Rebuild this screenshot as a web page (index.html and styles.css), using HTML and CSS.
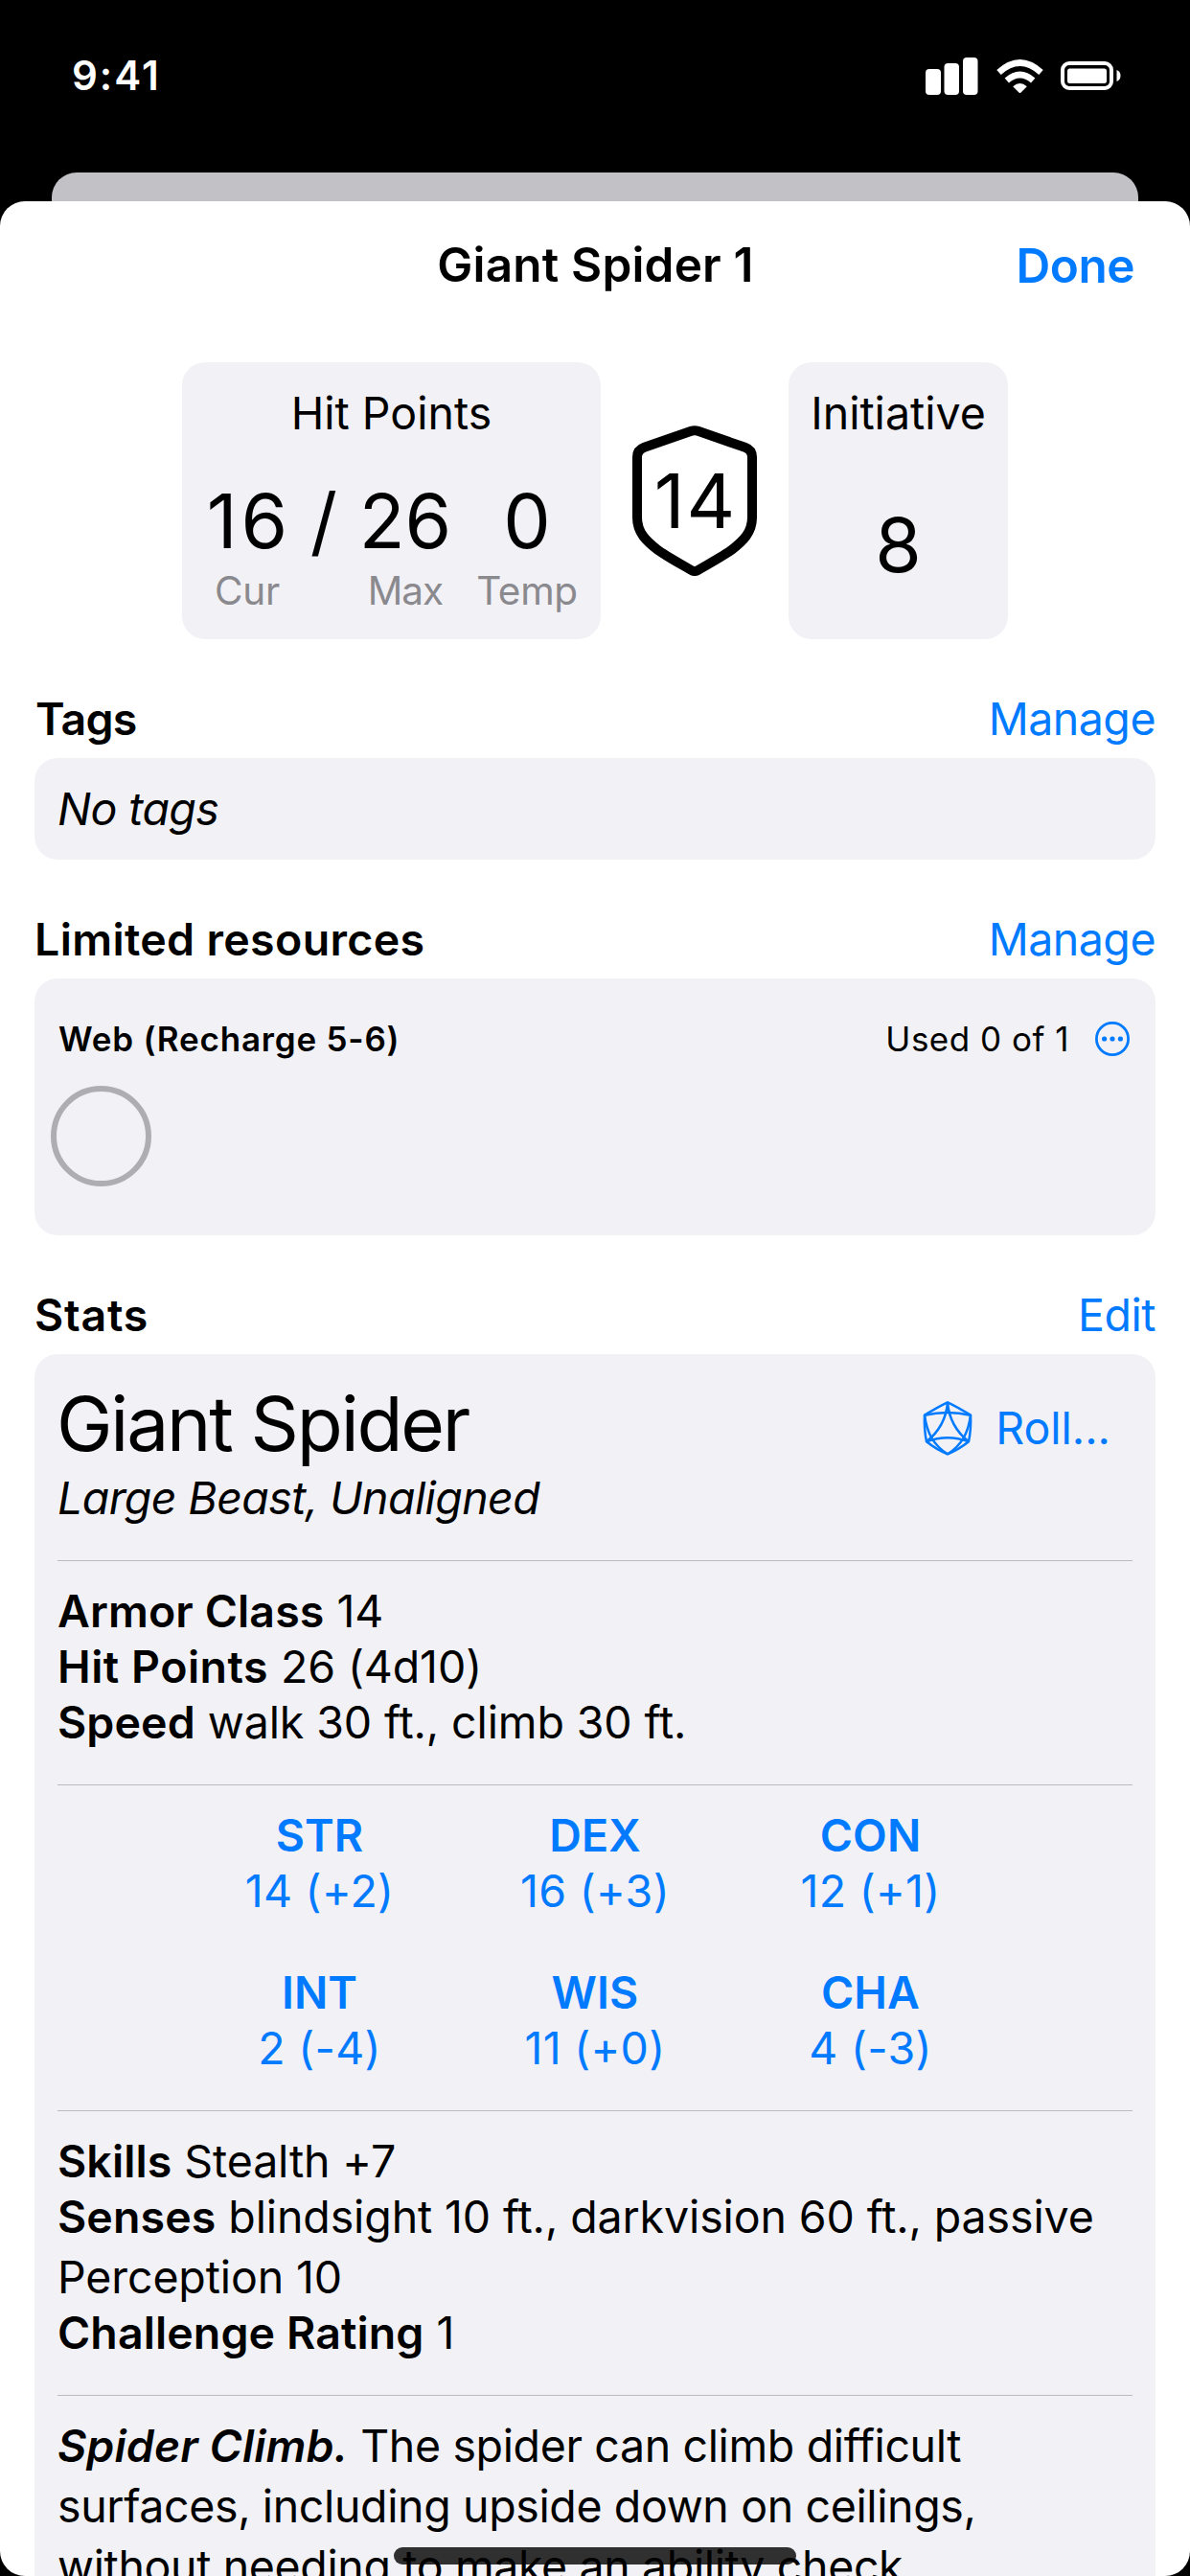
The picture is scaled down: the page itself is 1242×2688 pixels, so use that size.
FILE: index.html
```html
<!DOCTYPE html>
<html lang="en">
<head>
<meta charset="utf-8">
<title>Giant Spider 1</title>
<link rel="stylesheet" href="styles.css">
</head>
<body>
<div class="screen">
  <header class="status">
    <span class="status-time">9:41</span>
    <div class="status-icons">
      <svg class="icon-signal" width="55" height="39" viewBox="0 0 55 39" fill="#fff">
        <rect x="0" y="12" width="16" height="27" rx="4"/>
        <rect x="19.5" y="6" width="15.5" height="33" rx="4"/>
        <rect x="39" y="0" width="15.5" height="39" rx="4"/>
      </svg>
      <svg class="icon-wifi" width="49" height="36" viewBox="0 0 49 36">
        <path d="M2.5 13.5Q24.5 -6.5 46.5 13.5" fill="none" stroke="#fff" stroke-width="6.6"/>
        <path d="M10.8 22Q24.5 10 38.2 22" fill="none" stroke="#fff" stroke-width="6.6"/>
        <path d="M17.2 28.2Q24.5 22 31.8 28.2L25.3 34.7Q24.5 35.5 23.7 34.7Z" fill="#fff"/>
      </svg>
      <svg class="icon-battery" width="63" height="30" viewBox="0 0 63 30">
        <rect x="2" y="2" width="51" height="26" rx="7" fill="none" stroke="#fff" stroke-width="4"/>
        <rect x="7" y="7.5" width="41" height="15.5" rx="2.5" fill="#fff"/>
        <path d="M58.5 9Q62.5 10.5 62.5 15T58.5 21Z" fill="#fff"/>
      </svg>
    </div>
  </header>
  <div class="backdrop-sheet"></div>
  <main class="sheet">
    <div class="navbar">
      <h1 class="navbar-title">Giant Spider 1</h1>
      <a class="navbar-done">Done</a>
    </div>

    <section class="vitals">
      <div class="tile tile-hp">
        <h2 class="tile-title">Hit Points</h2>
        <div class="hp-grid">
          <div class="hp-cell"><span class="num num-one">16</span><span class="hp-label">Cur</span></div>
          <div class="hp-cell"><span class="num">/</span></div>
          <div class="hp-cell"><span class="num">26</span><span class="hp-label hp-max">Max</span></div>
          <div class="hp-cell hp-temp"><span class="num">0</span><span class="hp-label">Temp</span></div>
        </div>
      </div>
      <div class="shield">
        <svg width="130" height="157" viewBox="0 0 130 157"><path d="M61.5 5.8Q65 4.6 68.5 5.8L117.5 22.8Q125 25.5 125 33V96C125 112 115 121 104 129.5C96 135.5 84 142 68.5 151Q65 153 61.5 151C46 142 34 135.5 26 129.5C15 121 5 112 5 96V33Q5 25.5 12.5 22.8Z" fill="none" stroke="#000" stroke-width="10" stroke-linejoin="round"/></svg>
        <span class="num num-ac">14</span>
      </div>
      <div class="tile tile-init">
        <h2 class="tile-title">Initiative</h2>
        <span class="num num-init">8</span>
      </div>
    </section>

    <section class="section">
      <div class="section-head"><h2>Tags</h2><a>Manage</a></div>
      <div class="card"><p class="empty">No tags</p></div>
    </section>

    <section class="section">
      <div class="section-head"><h2 class="wide">Limited resources</h2><a>Manage</a></div>
      <div class="card card-resource">
        <div class="resource-row">
          <h3>Web (Recharge 5-6)</h3>
          <span class="resource-used">Used 0 of 1</span>
          <svg width="36" height="36" viewBox="0 0 36 36"><circle cx="18" cy="18" r="16.6" fill="none" stroke="#007aff" stroke-width="2.8"/><g fill="#007aff"><circle cx="9.6" cy="18" r="2.6"/><circle cx="18" cy="18" r="2.6"/><circle cx="26.4" cy="18" r="2.6"/></g></svg>
        </div>
        <div class="slot"></div>
      </div>
    </section>

    <section class="section section-stats">
      <div class="section-head"><h2 class="stats-word">Stats</h2><a>Edit</a></div>
      <div class="card card-stats">
        <div class="creature-head">
          <h2 class="creature-name">Giant Spider</h2>
          <a class="roll">
            <svg width="52" height="58" viewBox="22 20 156 174" fill="none" stroke="#007aff" stroke-width="7.5" stroke-linejoin="round">
              <path d="M100 27Q132 42 172 67Q174 112 166 150Q135 175 100 189Q65 175 34 150Q26 112 28 67Q68 42 100 27Z"/>
              <path d="M28 67Q100 51 172 67"/>
              <path d="M34 150Q100 125 166 150"/>
              <path d="M100 27C96 78 75 117 34 150"/>
              <path d="M100 27C104 78 125 117 166 150"/>
              <path d="M28 67C35 122 55 160 100 189"/>
              <path d="M172 67C165 122 145 160 100 189"/>
            </svg>
            <span>Roll...</span>
          </a>
        </div>
        <p class="subtitle">Large Beast, Unaligned</p>
        <hr>
        <p><b>Armor Class</b> 14</p>
        <p><b class="b-hp">Hit Points</b> 26 (4d10)</p>
        <p><b>Speed</b> walk 30 ft., climb 30 ft.</p>
        <hr>
        <div class="abilities">
          <div class="ability"><b>STR</b><span>14 (+2)</span></div>
          <div class="ability"><b>DEX</b><span>16 (+3)</span></div>
          <div class="ability"><b>CON</b><span>12 (+1)</span></div>
          <div class="ability"><b>INT</b><span>2 (-4)</span></div>
          <div class="ability"><b>WIS</b><span>11 (+0)</span></div>
          <div class="ability"><b>CHA</b><span>4 (-3)</span></div>
        </div>
        <hr>
        <p><b>Skills</b> Stealth +7</p>
        <p class="multiline"><b>Senses</b> blindsight 10 ft., darkvision 60 ft., passive<br>Perception 10</p>
        <p><b>Challenge Rating</b> 1</p>
        <hr>
        <p class="multiline trait"><b><i>Spider Climb.</i></b> The spider can climb difficult<br>surfaces, including upside down on ceilings,<br>without needing to make an ability check.</p>
      </div>
    </section>
  </main>
  <div class="home-indicator"></div>
</div>
</body>
</html>
```
FILE: styles.css
```css
* { box-sizing: border-box; }

body {
  margin: 0;
  background: #000;
  color: #000;
  font-family: Inter, "Liberation Sans", sans-serif;
  font-size: 46.5px;
  line-height: 58px;
}

h1, h2, h3, p { margin: 0; font: inherit; }
a { color: #007aff; }
svg { display: block; flex: none; }
b { font-weight: 600; letter-spacing: 0.1px; }

.screen {
  position: relative;
  display: flex;
  flex-direction: column;
  width: 1242px;
  height: 2688px;
  overflow: hidden;
}

/* Status bar */
.status {
  display: flex;
  justify-content: space-between;
  align-items: flex-start;
  height: 180px;
  padding: 60px 72px 0 75px;
  color: #fff;
}
.status-time {
  margin-top: -1px;
  font-size: 42px;
  line-height: 40px;
  font-weight: 600;
  letter-spacing: 2px;
}
.status-icons { display: flex; }
.icon-wifi { margin: 2px 18px 0 19px; }
.icon-battery { margin-top: 4px; }

/* Sheets */
.backdrop-sheet {
  flex: none;
  height: 30px;
  margin: 0 54px;
  border-radius: 26px 26px 0 0;
  background: #c2c1c6;
}
.sheet {
  flex: 1;
  min-height: 0;
  padding: 0 36px;
  overflow: hidden;
  border-radius: 26px;
  background: #fff;
}

.navbar {
  display: grid;
  grid-template-columns: 1fr auto 1fr;
  align-items: center;
  height: 168px;
  padding: 0 22px 36px 23px;
  font-size: 49.5px;
  font-weight: 600;
}
.navbar-title { grid-column: 2; letter-spacing: 0.17px; }
.navbar-done { justify-self: end; padding-top: 2px; letter-spacing: -0.5px; }

/* Vitals */
.vitals {
  display: flex;
  justify-content: center;
  align-items: center;
  gap: 33px;
  margin-bottom: 54px;
}
.tile {
  height: 289px;
  padding-top: 24px;
  border-radius: 24px;
  background: #f2f1f6;
  text-align: center;
}
.tile-hp { width: 437px; }
.tile-init { width: 229px; }
.num {
  display: block;
  font-size: 78.5px;
  line-height: 96px;
}
.hp-grid {
  display: grid;
  grid-template-columns: 88px 72px 98px 106px;
  justify-content: start;
  padding: 36px 24px 0;
}
.hp-cell { white-space: nowrap; }
.hp-temp { margin: 0 -25px 0 25px; }
.hp-label {
  display: block;
  margin-top: 1px;
  color: #8a898e;
  font-size: 40.5px;
  line-height: 48px;
  letter-spacing: -0.3px;
}
.hp-max { letter-spacing: -1px; }
.num-one { letter-spacing: 4px; margin-right: -4px; }
.shield { display: grid; place-items: center; width: 130px; }
.shield > * { grid-area: 1 / 1; }
.num-ac { letter-spacing: 2px; margin-right: -2px; }
.num-init { margin-top: 61px; }

/* Sections */
.section { margin-bottom: 54px; }
.section-head {
  display: flex;
  justify-content: space-between;
  margin-bottom: 12px;
}
.section-head h2 { font-weight: 600; letter-spacing: -0.8px; padding-left: 1px; }
.section-head a { letter-spacing: -0.5px; }
.section-head h2.wide { letter-spacing: 0.35px; padding-left: 0; }
.section-head h2.stats-word { letter-spacing: 0.8px; padding-left: 0; }
.card {
  padding: 24px;
  border-radius: 24px;
  background: #f2f1f6;
}
.empty { font-style: italic; letter-spacing: -0.6px; }

.card-resource { height: 268px; padding-top: 42px; }
.resource-row {
  display: flex;
  align-items: center;
  padding: 0 3px 0 1px;
  font-size: 35px;
  line-height: 42px;
}
.resource-row h3 { font-weight: 600; letter-spacing: 0.8px; }
.resource-used { margin: 0 27px 0 auto; letter-spacing: 0.5px; }
.slot {
  width: 105px;
  height: 105px;
  margin: 28px 0 0 -7px;
  border: 6px solid #aeadb2;
  border-radius: 50%;
}

/* Stat block */
.card-stats { height: 1400px; white-space: nowrap; }
.card-stats hr {
  height: 1px;
  margin: 36px 0 23px;
  border: 0;
  background: #bbbac0;
}
.card-stats p { letter-spacing: -0.12px; }
.creature-head { display: flex; justify-content: space-between; align-items: flex-start; }
.creature-name {
  margin-left: -1px;
  font-size: 78.5px;
  line-height: 97px;
  letter-spacing: -2.2px;
}
.roll { display: flex; align-items: center; gap: 24px; padding: 24px 23px 0 0; }
.card-stats .subtitle { font-style: italic; letter-spacing: -0.6px; }
.b-hp { letter-spacing: 0.5px; }
.card-stats .multiline { line-height: 63px; margin: -2px 0 -3px; }
.card-stats .trait { letter-spacing: -0.37px; }

.abilities {
  display: grid;
  grid-template-columns: repeat(3, 287.5px);
  justify-content: center;
  row-gap: 48px;
  color: #007aff;
  text-align: center;
}
.ability { display: flex; flex-direction: column; }
.ability span { letter-spacing: 0.3px; }

.home-indicator {
  position: absolute;
  left: 411px;
  bottom: 12px;
  width: 420px;
  height: 18px;
  border-radius: 9px;
  background: rgba(0, 0, 0, 0.8);
}
```
